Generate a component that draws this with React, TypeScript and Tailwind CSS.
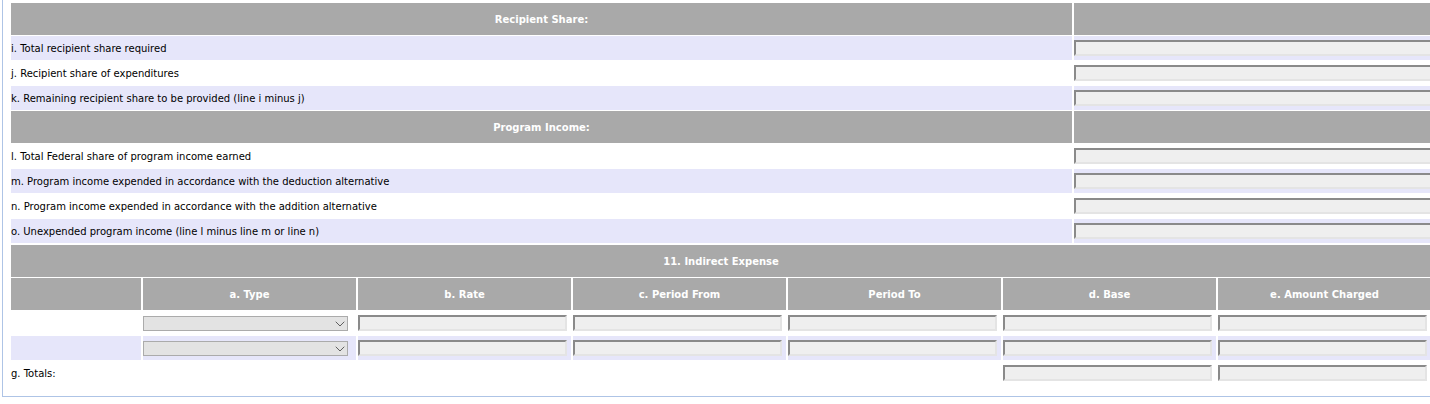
import { ChevronDown } from 'lucide-react'

const recipientRows = [
  'i. Total recipient share required',
  'j. Recipient share of expenditures',
  'k. Remaining recipient share to be provided (line i minus j)',
]

const incomeRows = [
  'l. Total Federal share of program income earned',
  'm. Program income expended in accordance with the deduction alternative',
  'n. Program income expended in accordance with the addition alternative',
  'o. Unexpended program income (line l minus line m or line n)',
]

const expenseCols = ['a. Type', 'b. Rate', 'c. Period From', 'Period To', 'd. Base', 'e. Amount Charged']

function TextBox({ wide }: { wide?: boolean }) {
  return (
    <input
      type="text"
      className={`block h-4 ${wide ? 'w-[362px]' : 'w-[209px]'} bg-[#efefef] border-2 border-t-[#8a8a8a] border-l-[#8a8a8a] border-r-[#e4e4e4] border-b-[#e4e4e4] outline-none`}
    />
  )
}

function TypeSelect() {
  return (
    <div className="relative w-[205px] h-[15px]">
      <select className="block w-full h-full appearance-none bg-[#e3e3e3] border border-[#ababab] outline-none" />
      <ChevronDown
        size={16}
        strokeWidth={1.5}
        className="absolute right-0 top-0 text-[#5f5f5f] pointer-events-none"
      />
    </div>
  )
}

function SectionHeader({ title }: { title: string }) {
  return (
    <tr className="h-8">
      <td className="bg-[#a9a9a9] text-center text-white font-bold">{title}</td>
      <td className="bg-[#a9a9a9]" />
    </tr>
  )
}

function LineRow({ label, shaded }: { label: string; shaded: boolean }) {
  const bg = shaded ? 'bg-[#e6e6fa]' : 'bg-white'
  return (
    <tr className="h-6">
      <td className={`${bg} p-0 align-middle`}>{label}</td>
      <td className={`${bg} p-0 align-middle overflow-visible`}>
        <TextBox wide />
      </td>
    </tr>
  )
}

export default function App() {
  return (
    <div className="w-full h-[404px] overflow-hidden bg-white font-['DejaVu_Sans',sans-serif] text-[10px] text-black">
      <div className="w-[1440px] ml-[2px] border-l border-b border-[#aec4e6] pl-1.5 pt-[2px] pb-[10px]">
        {/* Recipient share + program income */}
        <table className="table-fixed w-[1424px] border-separate border-spacing-x-0.5 border-spacing-y-px">
          <colgroup>
            <col className="w-[1061px]" />
            <col className="w-[357px]" />
          </colgroup>
          <tbody>
            <SectionHeader title="Recipient Share:" />
            {recipientRows.map((r, i) => (
              <LineRow key={r} label={r} shaded={i % 2 === 0} />
            ))}
            <SectionHeader title="Program Income:" />
            {incomeRows.map((r, i) => (
              <LineRow key={r} label={r} shaded={i % 2 === 1} />
            ))}
          </tbody>
        </table>

        {/* 11. Indirect expense */}
        <table className="table-fixed w-[1424px] border-separate border-spacing-x-0.5 border-spacing-y-px">
          <colgroup>
            <col className="w-[130px]" />
            {expenseCols.map((c) => (
              <col key={c} className="w-[213px]" />
            ))}
          </colgroup>
          <tbody>
            <tr className="h-8">
              <td colSpan={7} className="bg-[#a9a9a9] text-center text-white font-bold">
                11. Indirect Expense
              </td>
            </tr>
            <tr className="h-8">
              <td className="bg-[#a9a9a9]" />
              {expenseCols.map((c) => (
                <td key={c} className="bg-[#a9a9a9] text-center text-white font-bold">
                  {c}
                </td>
              ))}
            </tr>
            {[false, true].map((shaded, i) => {
              const bg = shaded ? 'bg-[#e6e6fa]' : 'bg-white'
              return (
                <tr key={i} className="h-6">
                  <td className={bg} />
                  <td className={`${bg} p-0 align-middle`}>
                    <TypeSelect />
                  </td>
                  {[0, 1, 2, 3, 4].map((j) => (
                    <td key={j} className={`${bg} p-0 align-middle`}>
                      <TextBox />
                    </td>
                  ))}
                </tr>
              )
            })}
            <tr className="h-6">
              <td className="p-0 align-middle">g. Totals:</td>
              <td />
              <td />
              <td />
              <td />
              <td className="p-0 align-middle">
                <TextBox />
              </td>
              <td className="p-0 align-middle">
                <TextBox />
              </td>
            </tr>
          </tbody>
        </table>
      </div>
    </div>
  )
}
